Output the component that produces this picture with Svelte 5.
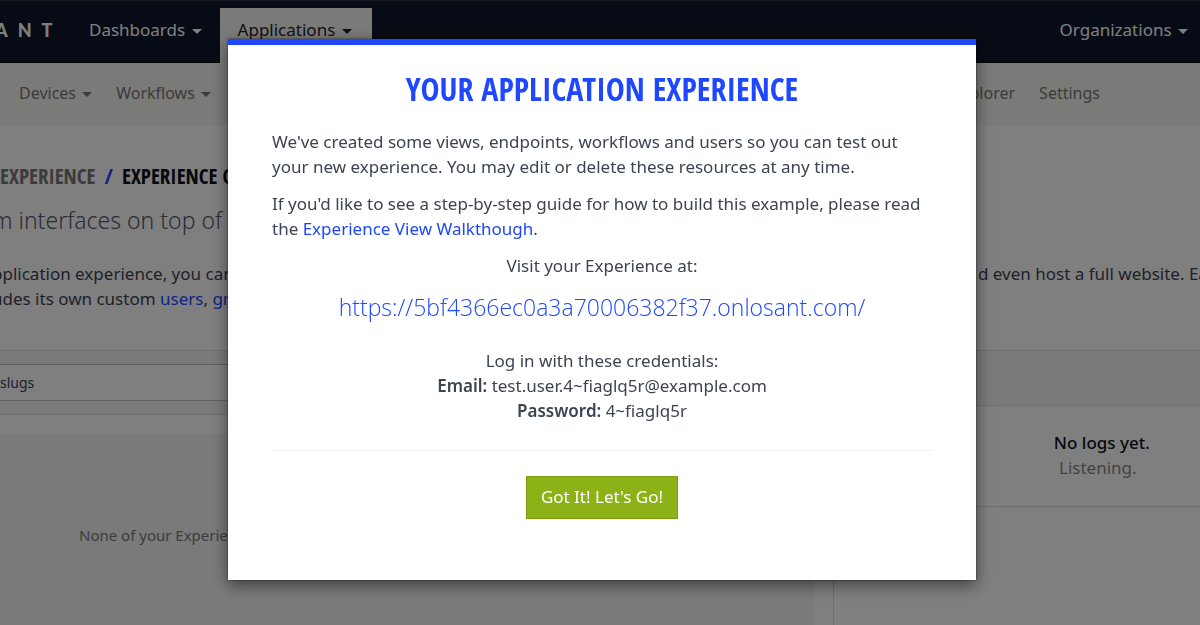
<script>
  let open = $state(true);
</script>

{#snippet caret()}
  <svg class="caret" viewBox="0 0 10 5" aria-hidden="true"><path d="M0 0h10L5 5z" fill="currentColor" /></svg>
{/snippet}

<div class="page">
  <header class="topbar">
    <a class="logo" href="#home"><span>A</span><span>N</span><span>T</span></a>
    <nav class="primary">
      <button type="button">Dashboards {@render caret()}</button>
      <button type="button" class="active">Applications {@render caret()}</button>
    </nav>
    <button type="button" class="orgs">Organizations {@render caret()}</button>
  </header>

  <nav class="subnav">
    <button type="button">Devices {@render caret()}</button>
    <button type="button">Workflows {@render caret()}</button>
    <a class="first-right" href="#explorer">Explorer</a>
    <a href="#settings">Settings</a>
  </nav>

  <section class="intro">
    <h1><a href="#experience">Experience</a><i>/</i><span>Experience Overview</span></h1>
    <p class="lead">m interfaces on top of</p>
    <div class="copy">
      <p>pplication experience, you can<br />udes its own custom <a href="#users">users</a>, <a href="#groups">groups</a></p>
      <p class="rest">d even host a full website. Each</p>
    </div>
  </section>

  <div class="panels">
    <section class="endpoints">
      <div class="filter"><input type="text" value="slugs" aria-label="Filter endpoints" /></div>
      <div class="empty">None of your Experience</div>
    </section>
    <aside class="logs">
      <div class="logs-head"></div>
      <div class="logs-body"><strong>No logs yet.</strong><span>Listening.</span></div>
    </aside>
  </div>
</div>

{#if open}
  <div class="overlay">
    <div class="modal" role="dialog" aria-modal="true" aria-labelledby="modal-title">
      <h2 id="modal-title">Your Application Experience</h2>
      <p>We've created some views, endpoints, workflows and users so you can test out your new experience. You may edit or delete these resources at any time.</p>
      <p>If you'd like to see a step-by-step guide for how to build this example, please read the <a href="#walkthrough">Experience View Walkthough</a>.</p>
      <p class="center">Visit your Experience at:</p>
      <a class="url" href="#visit">https://5bf4366ec0a3a70006382f37.onlosant.com/</a>
      <p class="center">
        Log in with these credentials:<br />
        <b>Email:</b> test.user.4~fiaglq5r@example.com<br />
        <b>Password:</b> 4~fiaglq5r
      </p>
      <hr />
      <button type="button" class="go" onclick={() => (open = false)}>Got It! Let's Go!</button>
    </div>
  </div>
{/if}

<style>
  :global(body) {
    margin: 0;
    background: #fff;
  }
  .page,
  .overlay {
    font-family: 'Noto Sans', 'Open Sans', sans-serif;
    font-size: 17px;
    line-height: 25px;
    color: #3c4353;
    box-sizing: border-box;
  }
  .page {
    height: 100vh;
    overflow: hidden;
    display: flex;
    flex-direction: column;
  }
  h1, h2, p {
    margin: 0;
  }
  a {
    color: #1e47ff;
    text-decoration: none;
  }
  button {
    font: inherit;
    color: inherit;
    background: none;
    border: 0;
    padding: 0;
    cursor: pointer;
  }
  .caret {
    width: 10px;
    height: 5px;
    margin-left: 2px;
    vertical-align: 2px;
  }

  .topbar {
    display: flex;
    height: 63px;
    flex: none;
    background: #0d172a;
    box-sizing: border-box;
    border-top: 1px solid #28303f;
    border-bottom: 1px solid #04060c;
    color: #fff;
  }
  .logo {
    display: flex;
    gap: 10px;
    width: 72px;
    margin-left: -5px;
    padding-top: 17px;
    font: 900 18px/25px Lato, sans-serif;
    color: #fff;
  }
  .primary {
    display: flex;
    align-items: stretch;
    padding-top: 7px;
    margin-bottom: -1px;
  }
  .primary button {
    padding: 0 18px 12px;
    margin-left: 4px;
  }
  .primary button + button {
    margin-left: 0;
  }
  .primary .active {
    background: #f4f4f0;
    color: #1c2230;
    padding-right: 20px;
  }
  .orgs {
    margin-left: auto;
    padding: 0 12px 4px 0;
  }

  .subnav {
    display: flex;
    align-items: center;
    gap: 24px;
    height: 62px;
    flex: none;
    padding: 0 100px 2px 19px;
    box-sizing: border-box;
    background: #f4f4f0;
    color: #777;
    font-size: 16px;
  }
  .subnav a {
    color: inherit;
  }
  .first-right {
    margin-left: auto;
  }

  .intro {
    height: 226px;
    flex: none;
    box-sizing: border-box;
    padding-top: 35px;
    border-bottom: 1px solid #dcdcda;
    white-space: nowrap;
    overflow: hidden;
  }
  h1 {
    display: flex;
    gap: 9px;
    font: 700 21px/32px 'Open Sans Condensed', sans-serif;
    text-transform: uppercase;
    color: #0d111c;
  }
  h1 a {
    color: #777;
  }
  h1 i {
    color: #1e47ff;
    font-style: normal;
  }
  .lead {
    margin: 12px 0 25px -8px;
    font-size: 23px;
    line-height: 32px;
    font-weight: 300;
    color: #555b69;
  }
  .copy {
    display: flex;
    justify-content: space-between;
    margin: 0 -50px 0 -8px;
  }
  .rest {
    width: 272px;
  }

  .panels {
    display: flex;
    flex: 1;
  }
  .endpoints {
    flex: 832;
    display: flex;
    flex-direction: column;
    border-right: 1px solid #dcdcda;
  }
  .filter {
    padding: 13px 0;
    background: #f4f4f0;
    border-bottom: 1px solid #dcdcda;
  }
  .filter input {
    display: block;
    width: 100%;
    height: 37px;
    box-sizing: border-box;
    border: solid #bbb;
    border-width: 1px 0;
    padding: 0;
    background: #fff;
    font: 14px/25px 'Noto Sans', sans-serif;
    color: #3c4353;
  }
  .empty {
    flex: 1;
    margin: 19px 19px 0 0;
    padding: 89px 0 0 79px;
    background: #f4f4f0;
    color: #777a83;
    font-size: 15px;
  }
  .logs {
    flex: 366;
  }
  .logs-head {
    height: 54px;
    background: #f4f4f0;
    border-bottom: 1px solid #dcdcda;
  }
  .logs-body {
    display: flex;
    flex-direction: column;
    height: 101px;
    padding: 0 0 3px 170px;
    align-items: center;
    justify-content: center;
    box-sizing: border-box;
    border-bottom: 1px solid #dcdcda;
    color: #888;
  }
  .logs-body strong {
    font-weight: 500;
    color: #0d111c;
  }
  .logs-body span {
    padding-right: 8px;
  }

  .overlay {
    position: fixed;
    inset: 0;
    display: flex;
    justify-content: center;
    align-items: flex-start;
    padding: 39px 0 0 4px;
    background: rgba(0, 0, 0, 0.5);
  }
  .modal {
    width: 748px;
    box-sizing: border-box;
    padding: 24px 44px 61px;
    display: flex;
    flex-direction: column;
    background: #fff;
    border-top: 6px solid #1e47ff;
    box-shadow: 0 5px 15px rgba(0, 0, 0, 0.5), 0 0 2px rgba(0, 0, 0, 0.6);
  }
  h2 {
    font: 700 32px/40px 'Open Sans Condensed', sans-serif;
    text-align: center;
    text-transform: uppercase;
    color: #1e47ff;
    margin-bottom: 20px;
  }
  .modal p {
    margin-bottom: 12px;
  }
  .modal .center {
    text-align: center;
  }
  .modal b {
    font-weight: 600;
  }
  .url {
    margin: 0 0 24px;
    font-family: 'Open Sans', sans-serif;
    font-size: 23px;
    line-height: 34px;
    font-weight: 300;
    text-align: center;
  }
  hr {
    width: 100%;
    height: 1px;
    margin: 15px 0 25px;
    border: 0;
    background: #eee;
  }
  .go {
    align-self: center;
    padding: 7px 14px 9px;
    border: 1px solid #7a9e0c;
    background: #8db217;
    color: #fff;
  }
</style>
